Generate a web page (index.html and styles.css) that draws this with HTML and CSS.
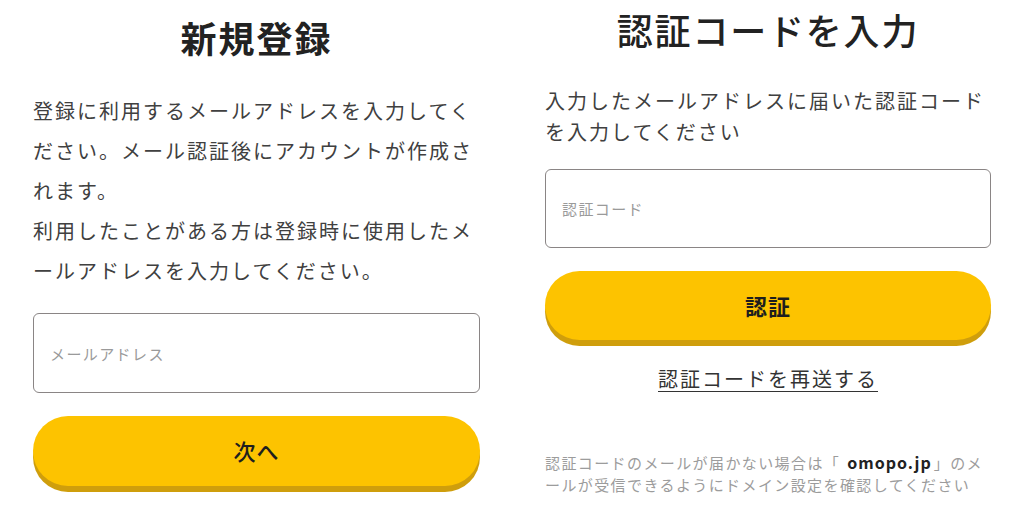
FILE: index.html
```html
<!DOCTYPE html>
<html lang="ja">
<head>
<meta charset="utf-8">
<title>登録</title>
<link rel="stylesheet" href="styles.css">
</head>
<body>
<div class="page">
  <section class="panel panel-left">
    <h1 class="title title-left">新規登録</h1>
    <p class="lead lead-left">登録に利用するメールアドレスを入力してください。メール認証後にアカウントが作成されます。<br>利用したことがある方は登録時に使用したメールアドレスを入力してください。</p>
    <div class="field field-left"><span class="placeholder">メールアドレス</span></div>
    <button class="btn btn-left">次へ</button>
  </section>
  <section class="panel panel-right">
    <h1 class="title title-right">認証コードを入力</h1>
    <p class="lead lead-right">入力したメールアドレスに届いた認証コードを入力してください</p>
    <div class="field field-right"><span class="placeholder">認証コード</span></div>
    <button class="btn btn-right">認証</button>
    <a class="resend" href="#">認証コードを再送する</a>
    <p class="note">認証コードのメールが届かない場合は<span class="br">「</span><b>omopo.jp</b><span class="br">」</span>のメ<br>ールが受信できるようにドメイン設定を確認してください</p>
  </section>
</div>
</body>
</html>
```

FILE: styles.css
```css
* { box-sizing: border-box; }
html, body { margin: 0; padding: 0; background: #fff; }
body {
  font-family: "Noto Sans CJK JP", "Noto Sans", sans-serif;
  color: #3a3a3a;
  width: 1024px;
  height: 509px;
  overflow: hidden;
}
.page {
  display: flex;
  gap: 65px;
  padding-left: 33px;
}
.panel {
  display: flex;
  flex-direction: column;
}
.panel-left { width: 447px; padding-top: 16px; }
.panel-right { width: 446px; padding-top: 8px; }
.title {
  margin: 0;
  font-size: 36px;
  line-height: 43px;
  text-align: center;
  color: #222;
  letter-spacing: 2px;
  font-weight: 700;
}
.title-right { font-weight: 500; letter-spacing: 1.8px; }
.lead {
  margin: 0;
  font-size: 20px;
  color: #404040;
  letter-spacing: 2px;
}
.lead-left {
  margin-top: 32px;
  line-height: 40px;
}
.lead-right {
  margin-top: 34px;
  line-height: 31px;
}
.field {
  border: 1px solid #8a8585;
  border-radius: 6px;
  display: flex;
  align-items: center;
  padding-left: 16px;
  margin-top: 22px;
}
.field-left { height: 80px; }
.field-right { height: 79px; }
.placeholder {
  font-size: 15px;
  letter-spacing: 1.4px;
  color: #9a9a9a;
}
.btn {
  border: 0;
  margin-top: 23px;
  height: 70px;
  border-radius: 35px;
  background: #fdc300;
  box-shadow: 0 6px 0 #cf9e0c;
  font-family: inherit;
  font-size: 22px;
  color: #1e1e1e;
  letter-spacing: 1px;
  padding: 0 0 2px;
}
.btn-left { font-weight: 500; }
.btn-right { font-weight: 700; height: 69px; }
.resend {
  margin-top: 24px;
  align-self: center;
  font-size: 20px;
  line-height: 30px;
  letter-spacing: 2px;
  color: #333;
  text-decoration: underline;
  text-underline-offset: 4px;
  text-decoration-thickness: 1px;
}
.note {
  margin: 57px 0 0;
  font-size: 15px;
  line-height: 22px;
  letter-spacing: 1.4px;
  color: #9c9c9c;
  white-space: nowrap;
}
.note .br { display: inline-block; width: 16.4px; }
.note b { color: #222; font-weight: 700; font-size: 16px; letter-spacing: 1px; padding-left: 7px; padding-right: 2px; }
```
